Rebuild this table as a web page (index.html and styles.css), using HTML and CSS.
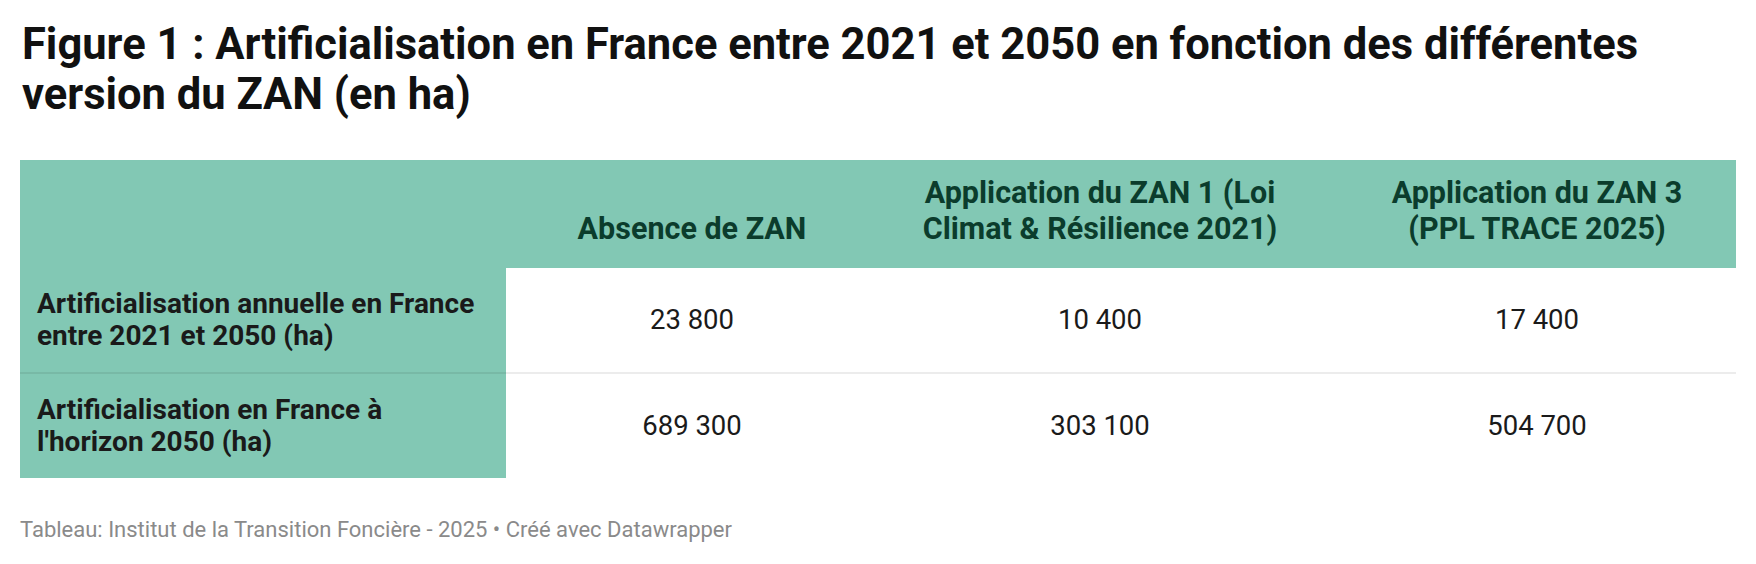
FILE: index.html
```html
<!DOCTYPE html>
<html lang="fr">
<head>
<meta charset="utf-8">
<title>Figure 1</title>
<link rel="stylesheet" href="styles.css">
</head>
<body>
<div class="chart">
  <h1 class="title">Figure 1 : Artificialisation en France entre 2021 et 2050 en fonction des différentes version du ZAN (en ha)</h1>
  <table class="data">
    <colgroup>
      <col class="c-label">
      <col class="c-a">
      <col class="c-b">
      <col class="c-c">
    </colgroup>
    <thead>
      <tr>
        <th class="head head-empty"></th>
        <th class="head head-a">Absence de ZAN</th>
        <th class="head head-b">Application du ZAN 1 (Loi Climat &amp; Résilience 2021)</th>
        <th class="head head-c">Application du ZAN 3 (PPL TRACE 2025)</th>
      </tr>
    </thead>
    <tbody>
      <tr class="row row-first">
        <th class="label">Artificialisation annuelle en France entre 2021 et 2050 (ha)</th>
        <td class="num num-a">23 800</td>
        <td class="num num-b">10 400</td>
        <td class="num num-c">17 400</td>
      </tr>
      <tr class="row">
        <th class="label">Artificialisation en France à l'horizon 2050 (ha)</th>
        <td class="num num-a">689 300</td>
        <td class="num num-b">303 100</td>
        <td class="num num-c">504 700</td>
      </tr>
    </tbody>
  </table>
  <p class="footer">Tableau: Institut de la Transition Foncière - 2025 • Créé avec Datawrapper</p>
</div>
</body>
</html>
```

FILE: styles.css
```css
* { box-sizing: border-box; }

html, body {
  margin: 0;
  padding: 0;
  background: #ffffff;
}

body {
  font-family: Roboto, "Liberation Sans", Arial, sans-serif;
  padding: 20px;
}

.chart {
  width: 1716px;
}

.title {
  margin: 0 0 40px 2px;
  font-size: 43.5px;
  line-height: 50px;
  font-weight: 700;
  color: #111111;
}

.data {
  width: 1716px;
  table-layout: fixed;
  border-collapse: separate;
  border-spacing: 0;
}

.c-label { width: 486px; }
.c-a { width: 372px; }
.c-b { width: 444px; }
.c-c { width: 414px; }

.head {
  background: #82c8b4;
  color: #0b3c2c;
  font-weight: 700;
  font-size: 30.5px;
  line-height: 36.7px;
  height: 108px;
  vertical-align: bottom;
  text-align: center;
  padding: 0 8px 20px 8px;
}

.head-c {
  padding-left: 40px;
  padding-right: 24px;
}

.row th,
.row td {
  height: 104px;
  vertical-align: middle;
}

.row-first th,
.row-first td {
  height: 106px;
  border-bottom: 2px solid rgba(0, 0, 0, 0.075);
}

.label {
  background: #82c8b4;
  color: #1a1a1a;
  font-weight: 700;
  font-size: 28px;
  line-height: 32px;
  text-align: left;
  padding: 0 24px 0 17px;
}

.num {
  color: #1a1a1a;
  font-weight: 400;
  font-size: 27.5px;
  line-height: 34px;
  text-align: center;
  padding: 0 8px;
}

.num-c {
  padding-left: 40px;
  padding-right: 24px;
}

.footer {
  margin: 39px 0 0 0;
  font-size: 22px;
  line-height: 25px;
  color: #8a8a8a;
}
```
